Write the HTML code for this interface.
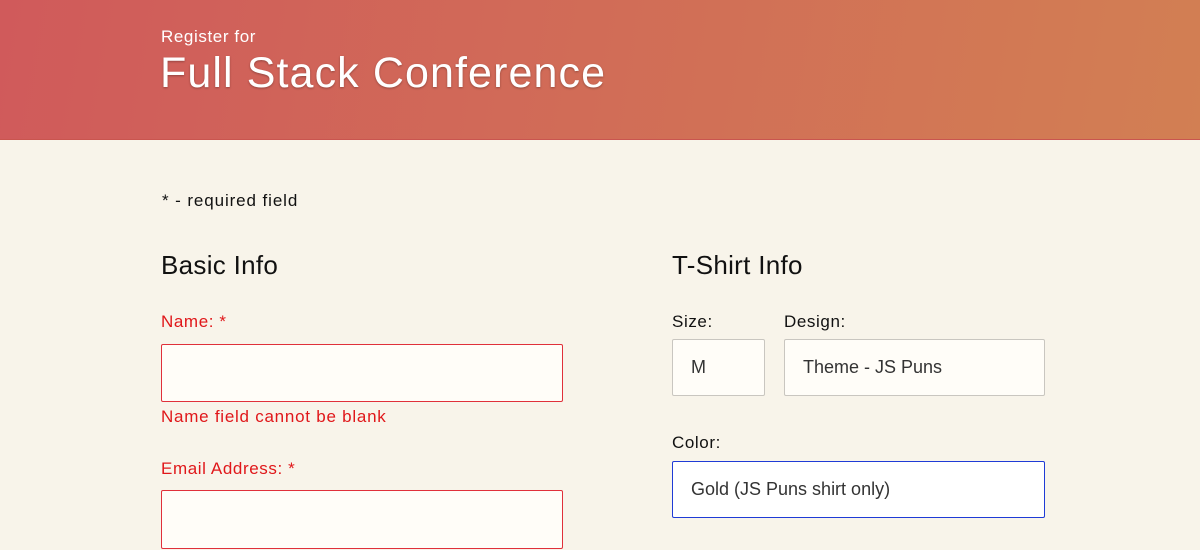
<!DOCTYPE html>
<html><head><style>
*{margin:0;padding:0;box-sizing:border-box}
body{width:1200px;height:550px;overflow:hidden;background:#f8f4ea;font-family:"Liberation Sans",sans-serif;position:relative;color:#111}
.hdr{position:absolute;left:0;top:0;width:1200px;height:140px;background:linear-gradient(100deg,#d05a5b,#d27f53);border-bottom:1px solid #c9554f}
.a{position:absolute;white-space:nowrap;line-height:1;letter-spacing:0.6px}
.box{position:absolute;border:1px solid #c9c6c0;background:#fffdf8;border-radius:2px;font-size:18px;color:#333;padding-left:18px;display:flex;align-items:center}
.red{color:#e0171a}
.err{border:1px solid #e0303a}
</style></head><body>
<div class="hdr"></div>
<div class="a" style="left:161px;top:28px;font-size:17px;color:#fff">Register for</div>
<div class="a" style="left:160px;top:52px;font-size:43px;color:#fff;letter-spacing:1.1px;text-shadow:0 1px 2px rgba(0,0,0,.3)">Full Stack Conference</div>
<div class="a" style="left:162px;top:192px;font-size:17px;letter-spacing:0.9px">* - required field</div>
<div class="a" style="left:161px;top:252px;font-size:26px;letter-spacing:0.3px">Basic Info</div>
<div class="a red" style="left:161px;top:313px;font-size:17px">Name: *</div>
<div class="box err" style="left:161px;top:344px;width:402px;height:58px"></div>
<div class="a red" style="left:161px;top:408px;font-size:17px;letter-spacing:0.75px">Name field cannot be blank</div>
<div class="a red" style="left:161px;top:460px;font-size:17px">Email Address: *</div>
<div class="box err" style="left:161px;top:490px;width:402px;height:59px"></div>
<div class="a" style="left:672px;top:252px;font-size:26px;letter-spacing:0.3px">T-Shirt Info</div>
<div class="a" style="left:672px;top:313px;font-size:17px">Size:</div>
<div class="a" style="left:784px;top:313px;font-size:17px">Design:</div>
<div class="box" style="left:672px;top:339px;width:93px;height:57px">M</div>
<div class="box" style="left:784px;top:339px;width:261px;height:57px">Theme - JS Puns</div>
<div class="a" style="left:672px;top:434px;font-size:17px">Color:</div>
<div class="box" style="left:672px;top:461px;width:373px;height:57px;border-color:#1f3bd6;background:#fff">Gold (JS Puns shirt only)</div>
</body></html>
